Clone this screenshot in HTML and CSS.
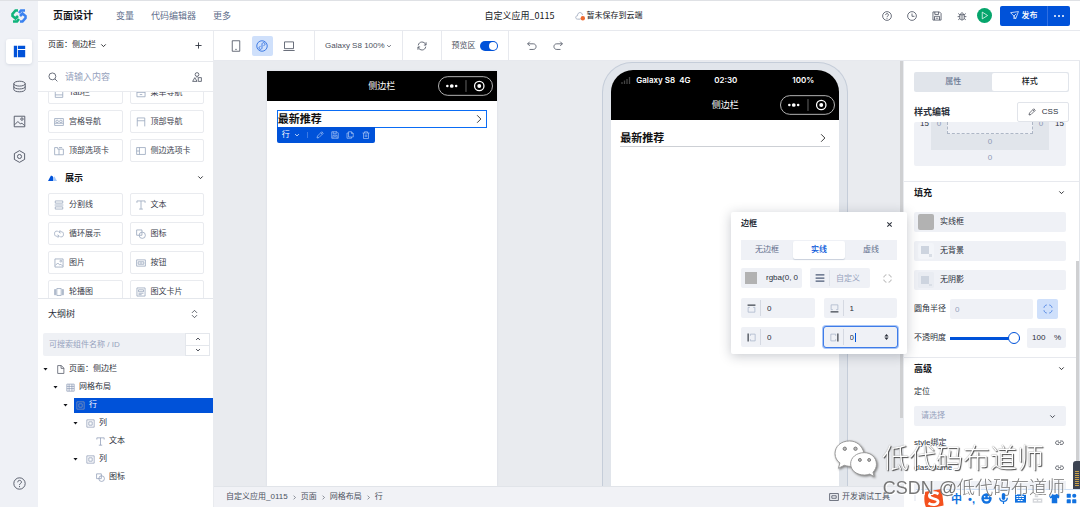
FILE: index.html
```html
<!DOCTYPE html>
<html lang="zh-CN">
<head>
<meta charset="utf-8">
<title>页面设计</title>
<link rel="stylesheet" href="styles.css">
</head>
<body>
<svg class="sprite" aria-hidden="true">
  <symbol id="chev" viewBox="0 0 16 16"><path d="M3 5.5l5 5 5-5"/></symbol>
  <symbol id="chev-r" viewBox="0 0 16 16"><path d="M5 2l6 6-6 6"/></symbol>
  <symbol id="plus" viewBox="0 0 16 16"><path d="M8 1v14M1 8h14"/></symbol>
  <symbol id="close" viewBox="0 0 16 16"><path d="M3 3l10 10M13 3L3 13"/></symbol>
  <symbol id="search" viewBox="0 0 16 16"><circle cx="7" cy="7" r="5.5"/><path d="M11 11l4 4"/></symbol>
  <symbol id="org" viewBox="0 0 16 16"><circle cx="8" cy="4" r="3"/><path d="M8 7v2M1 15l3.500-6L8 15zM10 9h5v6h-5z"/></symbol>
  <symbol id="db" viewBox="0 0 16 16"><ellipse cx="8" cy="4.500" rx="7" ry="3"/><path d="M1 4.500v7c0 4 14 4 14 0v-7M1 8c0 4 14 4 14 0"/></symbol>
  <symbol id="image" viewBox="0 0 16 16"><path d="M1.500 1.500h13v13h-13zM2 12l4-4 3 3 2-1 3 3"/><circle cx="11" cy="5" r="1.500"/></symbol>
  <symbol id="hex" viewBox="0 0 16 16"><path d="M8 .8l6.300 3.600v7.200L8 15.200l-6.300-3.600V4.400z"/><circle cx="8" cy="8" r="2.500"/></symbol>
  <symbol id="help" viewBox="0 0 16 16"><circle cx="8" cy="8" r="7"/><path d="M5.800 6.500c0-3.200 4.600-3 4.600-.2C10.400 8 8 8 8 9.800M8 11v1.500"/></symbol>
  <symbol id="clock" viewBox="0 0 16 16"><circle cx="8" cy="8" r="7"/><path d="M8 4v4.500h4"/></symbol>
  <symbol id="save" viewBox="0 0 16 16"><path d="M1.500 1.500h10.500l2.500 2.500v10.500h-13zM4.500 1.500v4h6v-4M4 14.500V8.500h8v6M6 11.500h4"/></symbol>
  <symbol id="bug" viewBox="0 0 16 16"><path d="M4.500 6h7v5c0 4.500-7 4.500-7 0zM5.500 6c0-4 5-4 5 0M8 6v8M1 9h3.500M11.500 9H15M2 4l2.500 2M14 4l-2.500 2M2 14l2.700-2M14 14l-2.700-2"/></symbol>
  <symbol id="play" viewBox="0 0 16 16"><path d="M4 2l9.500 6L4 14z"/></symbol>
  <symbol id="send" viewBox="0 0 16 16"><path d="M1 3l14-2-5 13-3-5zM7 9l4-4M7 9v5l2-2"/></symbol>
  <symbol id="phone" viewBox="0 0 16 16"><path d="M3 1h10v14H3zM7 12.500h2"/></symbol>
  <symbol id="mini" viewBox="0 0 16 16"><circle cx="8" cy="8" r="7"/><path d="M8 10.300c0 2.900-4 2.900-4 .2C4 9 5.200 8.700 6 8.500M8 10.300V5.700c0-2.900 4-2.900 4-.2 0 1.500-1.200 1.800-2 2"/></symbol>
  <symbol id="laptop" viewBox="0 0 16 16"><path d="M2 2.500h12v9H2zM.5 14h15"/></symbol>
  <symbol id="refresh" viewBox="0 0 16 16"><path d="M2 7c1-7 10-7 12-1M14 9c-1 7-10 7-12 1M14.500 2v4.500H11M1.500 14V9.500H5"/></symbol>
  <symbol id="undo" viewBox="0 0 16 16"><path d="M4.500 1L1 4.500 4.500 8M1 4.500h9c6 0 6 9 0 9H4"/></symbol>
  <symbol id="redo" viewBox="0 0 16 16"><path d="M11.500 1L15 4.500 11.500 8M15 4.500H6c-6 0-6 9 0 9h6"/></symbol>
  <symbol id="pencil" viewBox="0 0 16 16"><path d="M2 14l1-4 8.500-8.500 3 3L6 13zM9.500 3.500l3 3"/></symbol>
  <symbol id="copy" viewBox="0 0 16 16"><path d="M5 1.500h6l3.500 3.500v7H5zM11 1.500V5h3.500M5 4H2v10.500h9V12"/></symbol>
  <symbol id="trash" viewBox="0 0 16 16"><path d="M1 4h14M5 4V1.500h6V4M3 4v11h10V4M6.500 7v5M9.500 7v5"/></symbol>
  <symbol id="tabbar" viewBox="0 0 16 16"><path d="M2 1h12v14H2zM2 11h12"/></symbol>
  <symbol id="menu" viewBox="0 0 16 16"><path d="M1.500 2h13v12h-13zM1.500 7h13M6 10.500h4"/></symbol>
  <symbol id="grid-nav" viewBox="0 0 16 16"><path d="M1 2.500h14v11H1zM1 10h14"/><circle cx="5" cy="7" r="2"/><circle cx="11" cy="7" r="2"/></symbol>
  <symbol id="topnav" viewBox="0 0 16 16"><path d="M2 15V1.500h12V15M2 6h12"/></symbol>
  <symbol id="toptab" viewBox="0 0 16 16"><path d="M1 2.500h5V5h9v9H1zM8 2.500h5M8 5v9"/></symbol>
  <symbol id="sidetab" viewBox="0 0 16 16"><path d="M1 2.500h14v11H1zM5.500 2.500v11M1 8h4.500"/></symbol>
  <symbol id="divider" viewBox="0 0 16 16"><path d="M2 1.500h12v3.500H2zM1 8h14M2 11h12v3.500H2z"/></symbol>
  <symbol id="text" viewBox="0 0 16 16"><path d="M1.500 4.500v-3h13v3M8 1.500v13M5 14.500h6"/></symbol>
  <symbol id="loop" viewBox="0 0 16 16"><path d="M6 3.500H3.500c-3.500 0-3.500 8 0 8H8M10 12.500h2.500c3.500 0 3.500-8 0-8H8M6 9l2.500 2.500L6 14M10 2L7.500 4.500 10 7"/></symbol>
  <symbol id="shapes" viewBox="0 0 16 16"><path d="M1 1.500h8.500V10H1z"/><circle cx="10" cy="10" r="5"/></symbol>
  <symbol id="btn" viewBox="0 0 16 16"><path d="M1 3h14v10H1zM3.500 6h9v4h-9zM6 8h4"/></symbol>
  <symbol id="carousel" viewBox="0 0 16 16"><path d="M4.500 2.500h7v11h-7zM1 4v8.500h1.500V4zM13.500 4v8.500H15V4z"/></symbol>
  <symbol id="card" viewBox="0 0 16 16"><path d="M1.500 1.500h13v13h-13zM4 4.500h8v3H4zM4 10h8M4 12.300h5"/></symbol>
  <symbol id="file" viewBox="0 0 16 16"><path d="M3 1h6.500L14 5.500V15H3zM9 1v5h5"/></symbol>
  <symbol id="grid" viewBox="0 0 16 16"><path d="M1.500 2h13v12.500h-13zM1.500 6h13M1.500 10h13M5.500 2v12.500M10.500 2v12.500"/></symbol>
  <symbol id="box" viewBox="0 0 16 16"><path d="M1.500 1.500h13v13h-13zM5 5h6v6H5z"/></symbol>
  <symbol id="link" viewBox="0 0 16 16"><path d="M7 10.500H4c-4 0-4-6 0-6h3M9 4.500h3c4 0 4 6 0 6H9M5.500 7.500h5"/></symbol>
  <symbol id="corners" viewBox="0 0 16 16"><path d="M1.500 6C2 3.500 3.500 2 6 1.500M10 1.500c2.500.5 4 2 4.500 4.500M14.500 10c-.5 2.500-2 4-4.500 4.500M6 14.500C3.500 14 2 12.500 1.500 10"/></symbol>
  <symbol id="side" viewBox="0 0 16 16"><path class="pale" d="M5 6H2v8.500h12V6h-3"/><path class="edge" d="M1 2h14"/></symbol>
  <symbol id="lines" viewBox="0 0 16 16"><path d="M1 3h14M1 8h14M1 13h14"/></symbol>
  <symbol id="tool" viewBox="0 0 16 16"><path d="M1 2.500h14v11H1zM4.500 6h7v4h-7z"/></symbol>
  <symbol id="updown" viewBox="0 0 16 16"><path d="M3.500 6L8 1.500 12.500 6M3.500 10L8 14.500 12.500 10"/></symbol>
  <symbol id="capsule" viewBox="0 0 56 20"><rect x=".5" y=".5" width="55" height="19" rx="9.500" stroke="#b5b5b5"/><circle class="w" cx="9.500" cy="10" r="1.300"/><circle class="w" cx="14" cy="10" r="1.900"/><circle class="w" cx="18.500" cy="10" r="1.300"/><path d="M28.500 4v12" stroke="#666"/><circle cx="42" cy="10" r="4.800" stroke-width="1.300"/><circle class="w" cx="42" cy="10" r="2"/></symbol>
</svg>

<div class="app">
  <aside class="rail">
    <svg class="logo" viewBox="0 0 16 14"><path d="M7 1.500H4.500L1.500 5v2l3 2.500L7 7M2 12.500h4L8 10" stroke="#10b47c"/><path d="M9 12.500h2.500l3-3.500V7l-3-2.500L9 7M14 1.500h-4L8 4" stroke="#3b82f0"/></svg>
    <button class="rail-btn rail-active" aria-label="页面"><svg viewBox="0 0 16 16"><path fill="#0052d9" stroke="none" d="M1 1h4v14H1zM6 1h9v4H6zM6 6h9v9H6z"/></svg></button>
    <button class="rail-btn" aria-label="数据"><svg><use href="#db"/></svg></button>
    <button class="rail-btn" aria-label="素材"><svg><use href="#image"/></svg></button>
    <button class="rail-btn" aria-label="设置"><svg><use href="#hex"/></svg></button>
    <button class="rail-btn rail-help" aria-label="帮助"><svg><use href="#help"/></svg></button>
  </aside>

  <header class="header">
    <h1 class="title">页面设计</h1>
    <nav class="nav"><a href="#">变量</a><a href="#">代码编辑器</a><a href="#">更多</a></nav>
    <div class="doc"><span class="doc-name">自定义应用_0115</span>
      <span class="doc-state"><svg viewBox="0 0 16 16"><path d="M9 13H4c-4 0-3.500-5.500 0-5.500C4 1 11.500 1 12 6.500" stroke="#9aa5ba"/><circle cx="12.500" cy="11.500" r="3.500" fill="#ed6a30" stroke="none"/></svg>暂未保存到云端</span></div>
    <div class="actions">
      <button aria-label="帮助"><svg><use href="#help"/></svg></button>
      <button aria-label="历史"><svg><use href="#clock"/></svg></button>
      <button aria-label="保存"><svg><use href="#save"/></svg></button>
      <button aria-label="调试"><svg><use href="#bug"/></svg></button>
    </div>
    <button class="run" aria-label="预览"><svg><use href="#play"/></svg></button>
    <div class="publish"><button class="pub-main"><svg><use href="#send"/></svg>发布</button><button class="pub-more" aria-label="更多操作"><i></i><i></i><i></i></button></div>
  </header>

  <section class="left">
    <div class="page-pick"><button class="pick">页面：侧边栏<svg><use href="#chev"/></svg></button><button aria-label="新建页面"><svg><use href="#plus"/></svg></button></div>
    <div class="find"><svg><use href="#search"/></svg><input type="text" placeholder="请输入内容" aria-label="搜索组件"><svg class="org"><use href="#org"/></svg></div>
    <div class="library">
      <div class="library-scroll">
        <div class="cards">
          <button class="card"><svg><use href="#tabbar"/></svg>Tab栏</button>
          <button class="card"><svg><use href="#menu"/></svg>菜单导航</button>
          <button class="card"><svg><use href="#grid-nav"/></svg>宫格导航</button>
          <button class="card"><svg><use href="#topnav"/></svg>顶部导航</button>
          <button class="card"><svg><use href="#toptab"/></svg>顶部选项卡</button>
          <button class="card"><svg><use href="#sidetab"/></svg>侧边选项卡</button>
        </div>
        <h2 class="group"><svg class="group-icon" viewBox="0 0 18 12"><path fill="#0052d9" d="M0 12L6 1l4 2v9z"/><path fill="#a9cbfa" d="M10 12V5l3-2 5 9z"/></svg>展示<svg class="chev"><use href="#chev"/></svg></h2>
        <div class="cards">
          <button class="card"><svg><use href="#divider"/></svg>分割线</button>
          <button class="card"><svg><use href="#text"/></svg>文本</button>
          <button class="card"><svg><use href="#loop"/></svg>循环展示</button>
          <button class="card"><svg><use href="#shapes"/></svg>图标</button>
          <button class="card"><svg><use href="#image"/></svg>图片</button>
          <button class="card"><svg><use href="#btn"/></svg>按钮</button>
          <button class="card"><svg><use href="#carousel"/></svg>轮播图</button>
          <button class="card"><svg><use href="#card"/></svg>图文卡片</button>
        </div>
      </div>
    </div>
    <div class="outline">
      <h2 class="outline-head">大纲树<svg><use href="#updown"/></svg></h2>
      <div class="outline-find"><input type="text" placeholder="可搜索组件名称 / ID" aria-label="搜索大纲"><div class="steps"><button aria-label="上一个"><svg class="flip"><use href="#chev"/></svg></button><button aria-label="下一个"><svg><use href="#chev"/></svg></button></div></div>
      <ul class="tree">
        <li><i class="caret"></i><span class="node dark"><svg><use href="#file"/></svg>页面：侧边栏</span></li>
        <li class="d1"><i class="caret"></i><span class="node"><svg><use href="#grid"/></svg>网格布局</span></li>
        <li class="d2"><i class="caret"></i><span class="node selected"><svg><use href="#box"/></svg>行</span></li>
        <li class="d3"><i class="caret"></i><span class="node"><svg><use href="#box"/></svg>列</span></li>
        <li class="d4"><span class="node"><svg><use href="#text"/></svg>文本</span></li>
        <li class="d3"><i class="caret"></i><span class="node"><svg><use href="#box"/></svg>列</span></li>
        <li class="d4"><span class="node"><svg><use href="#shapes"/></svg>图标</span></li>
      </ul>
    </div>
  </section>

  <div class="toolbar">
    <div class="cell devices"><button aria-label="手机"><svg><use href="#phone"/></svg></button><button class="on" aria-label="小程序"><svg><use href="#mini"/></svg></button><button aria-label="电脑"><svg><use href="#laptop"/></svg></button></div>
    <div class="cell"><button class="zoom">Galaxy S8 100%<svg><use href="#chev"/></svg></button></div>
    <div class="cell reload"><button aria-label="刷新"><svg><use href="#refresh"/></svg></button></div>
    <div class="cell"><label class="switch">预览区<input type="checkbox" checked></label></div>
    <div class="cell history"><button aria-label="撤销"><svg><use href="#undo"/></svg></button><button aria-label="重做"><svg><use href="#redo"/></svg></button></div>
  </div>

  <main class="canvas">
    <section class="editor">
      <div class="navbar">侧边栏<span class="capsule"><svg><use href="#capsule"/></svg></span></div>
      <div class="editor-body">
        <div class="pick-row"><b>最新推荐</b><svg><use href="#chev-r"/></svg>
          <div class="quick"><button class="quick-name">行<svg><use href="#chev"/></svg></button><i></i><button aria-label="编辑"><svg><use href="#pencil"/></svg></button><button aria-label="保存"><svg><use href="#save"/></svg></button><button aria-label="复制"><svg><use href="#copy"/></svg></button><button aria-label="删除"><svg><use href="#trash"/></svg></button></div>
        </div>
      </div>
    </section>
    <section class="device">
      <div class="screen">
        <div class="status"><span class="carrier"><svg viewBox="0 0 10 8"><path d="M1 6v2M3.500 4.500V8M6 3v5M8.500 1v7" stroke="#444"/></svg>Galaxy S8&nbsp; 4G</span><span>02:30</span><span class="battery">100%</span></div>
        <div class="navbar">侧边栏<span class="capsule"><svg><use href="#capsule"/></svg></span></div>
        <div class="preview-row"><b>最新推荐</b><svg><use href="#chev-r"/></svg></div>
      </div>
    </section>
    <i class="canvas-scroll"></i>
  </main>

  <footer class="footer">
    <nav class="crumbs"><a href="#">自定义应用_0115</a><svg><use href="#chev-r"/></svg><a href="#">页面</a><svg><use href="#chev-r"/></svg><a href="#">网格布局</a><svg><use href="#chev-r"/></svg><a href="#">行</a></nav>
    <button class="devtool"><svg><use href="#tool"/></svg>开发调试工具</button>
  </footer>

  <aside class="props">
    <div class="seg"><button>属性</button><button class="seg-on">样式</button></div>
    <div class="style-head"><h2>样式编辑</h2><button class="css-btn"><svg><use href="#pencil"/></svg>CSS</button></div>
    <div class="boxmodel"><div class="margin-row"><span class="num">15</span><div class="padding-box"><div class="padding-row"><span>0</span><div class="content-box"></div><span>0</span></div><span class="below">0</span></div><span class="num">15</span></div><span class="below">0</span></div>
    <section class="sec">
      <h2 class="sec-head">填充<svg><use href="#chev"/></svg></h2>
      <div class="sec-body">
        <button class="fill"><i class="swatch"></i>实线框</button>
        <button class="fill"><i class="swatch none"></i>无背景</button>
        <button class="fill"><i class="swatch shade"></i>无阴影</button>
        <div class="field"><label for="radius">圆角半径</label><input id="radius" type="text" placeholder="0"><button class="corner" aria-label="分别设置"><svg><use href="#corners"/></svg></button></div>
        <div class="field"><label for="opacity">不透明度</label><input id="opacity" type="range" value="100"><span class="percent"><input type="text" value="100" aria-label="不透明度数值">%</span></div>
      </div>
    </section>
    <section class="sec sec-adv">
      <h2 class="sec-head">高级<svg><use href="#chev"/></svg></h2>
      <div class="adv">
        <label for="pos">定位</label>
        <div class="select"><select id="pos"><option>请选择</option></select><svg><use href="#chev"/></svg></div>
        <div class="bind"><span>style绑定</span><svg><use href="#link"/></svg></div>
        <div class="bind bind-class"><span>classname</span><svg><use href="#link"/></svg></div>
        <input class="class-input" type="text" aria-label="classname">
      </div>
    </section>
    <i class="props-scroll"></i>
  </aside>

  <div class="popover" role="dialog" aria-label="边框">
    <div class="pop-head"><h2>边框</h2><button aria-label="关闭"><svg><use href="#close"/></svg></button></div>
    <div class="pop-tabs"><button>无边框</button><button class="pop-on">实线</button><button>虚线</button></div>
    <div class="pop-color"><label class="color"><i></i><input type="text" value="rgba(0, 0" aria-label="颜色"></label><label class="custom"><svg><use href="#lines"/></svg><input type="text" placeholder="自定义" aria-label="线宽"></label><button aria-label="四边"><svg><use href="#corners"/></svg></button></div>
    <div class="sides">
      <label class="side"><svg><use href="#side"/></svg><input type="text" value="0" aria-label="上边框"></label>
      <label class="side"><svg class="r180"><use href="#side"/></svg><input type="text" value="1" aria-label="下边框"></label>
      <label class="side"><svg class="r270"><use href="#side"/></svg><input type="text" value="0" aria-label="左边框"></label>
      <label class="side focus"><svg class="r90"><use href="#side"/></svg><input type="text" value="0" aria-label="右边框"><i class="text-caret"></i><svg class="spin" viewBox="0 0 8 10"><path d="M4 0l3.500 4h-7zM4 10L.5 6h7z"/></svg></label>
    </div>
  </div>
</div>

<div class="ime">
  <svg class="sogou" viewBox="0 0 24 24"><path d="M3 4l18-3 2 18-18 4c-3-4-4-12-2-19z" fill="#f4511e"/><path d="M17.500 6.500C13 4 7.500 5 7.500 8.500c0 4.500 10 2 9.500 6.500-.4 3.500-6.500 4.200-10.500 1.500" stroke="#fff" stroke-width="3" fill="none"/></svg>
  <span>中</span><span>•,</span>
  <svg viewBox="0 0 16 16"><circle cx="8" cy="8" r="7.500"/><path d="M4 9c1 4 7 4 8 0z" fill="#fff"/><circle cx="5.300" cy="5.500" r="1.200" fill="#fff"/><circle cx="10.700" cy="5.500" r="1.200" fill="#fff"/></svg>
  <svg viewBox="0 0 16 16"><rect x="5.500" y="0" width="5" height="10" rx="2.500"/><path d="M2.500 7c0 7 11 7 11 0M8 12v4" fill="none" stroke="#1272e0" stroke-width="1.800"/></svg>
  <svg viewBox="0 0 16 16"><path d="M0 2h16v12H0z"/><path d="M2 5h12M2 8h12M4 11h8" stroke="#fff" stroke-width="1.500" stroke-dasharray="3 1"/></svg>
  <svg viewBox="0 0 16 16"><path d="M1 8h14v6H1zM4 3h5v3H4z" fill="#d5d7db"/><path d="M3 11h4M9 11h4" stroke="#fff" stroke-width="2"/></svg>
  <svg viewBox="0 0 16 16"><path d="M5 1c1 2 5 2 6 0l5 3-2 4-2-1v8H4V7L2 8 0 4z"/></svg>
  <svg viewBox="0 0 16 16"><rect x="1" y="1" width="6" height="6" rx="1"/><rect x="9" y="1" width="6" height="6" rx="3"/><rect x="1" y="9" width="6" height="6" rx="1"/><rect x="9" y="9" width="6" height="6" rx="1"/></svg>
</div>
<i class="meter"></i>
<div class="mark mark-big"><svg viewBox="0 0 44 40"><path d="M16 2C7 2 1 7.500 1 15c0 4 2 7.500 5 9.500L4.500 30l6-3c3 1 6 1.200 8 1 12-1 13-9 12-14C29 7 23 2 16 2z"/><path d="M31 14c-8 0-14 5-14 11.500S23 37 31 37c2 0 4-.4 5.500-1l4.500 2.500-1-4.500c2-2 3.500-5 3.500-8C43.500 19 38 14 31 14z"/><g class="eyes"><circle cx="11" cy="10" r="1.700"/><circle cx="22" cy="10" r="1.700"/><circle cx="26.500" cy="21.500" r="1.500"/><circle cx="36" cy="21.500" r="1.500"/></g></svg>低代码布道师</div>
<div class="mark mark-small">CSDN @低代码布道师</div>
</body>
</html>
```

FILE: styles.css
```css
* { box-sizing: border-box; }
body {
  margin: 0;
  font: 8px/12px "Liberation Sans", "Noto Sans CJK SC", sans-serif;
  color: #2b303b;
  background: #fff;
  overflow: hidden;
}
h1, h2, ul { margin: 0; padding: 0; list-style: none; }
h2 { font-size: 9px; line-height: 12px; font-weight: 700; }
button, input, select { font: inherit; color: inherit; border: 0; padding: 0; margin: 0; background: none; min-width: 0; outline: 0; }
button { display: inline-flex; align-items: center; justify-content: center; white-space: nowrap; }
input::placeholder { color: #96a2bd; opacity: 1; }
a { color: inherit; text-decoration: none; }
svg { width: 10px; height: 10px; flex: none; fill: none; stroke: currentColor; stroke-width: 1.3; }
.sprite { position: absolute; width: 0; height: 0; }

.app {
  position: relative;
  display: grid;
  grid-template: 30px 30px 1fr 21px / 38px 176px 1fr 176px;
  height: 100vh;
  border-top: 1px solid #dfe1e5;
}

/* icon rail */
.rail { grid-row: 1 / -1; grid-column: 1; background: #eff1f6; display: flex; flex-direction: column; align-items: center; gap: 10px; padding: 7px 0 11px; color: #4b5160; }
.logo { width: 16px; height: 16px; stroke-width: 2.6; margin-bottom: 5px; }
.rail-btn { width: 26px; height: 25px; border-radius: 3px; }
.rail-btn svg { width: 13px; height: 13px; stroke-width: 1.1; }
.rail-active { background: #fff; box-shadow: 0 1px 3px #d5d9e2; }
.rail-help { margin-top: auto; }

/* header */
.header { grid-row: 1; grid-column: 2 / -1; display: flex; align-items: center; padding: 0 10px 0 15px; border-bottom: 1px solid #e7e9ee; }
.title { font-size: 10px; line-height: 14px; color: #16181d; }
.nav { display: flex; gap: 17px; margin-left: 23px; font-size: 9px; color: #5f6f8c; }
.doc { flex: 1; display: flex; align-items: center; justify-content: center; gap: 20px; padding-left: 14px; }
.doc-name { font-size: 9px; color: #16181d; font-family: "Noto Sans CJK SC", sans-serif; }
.doc-state { display: flex; align-items: center; gap: 2px; color: #16181d; }
.actions { display: flex; gap: 15px; color: #4b5160; }
.run { width: 15px; height: 15px; border-radius: 50%; background: #06a56c; color: #fff; margin: 0 8px 0 10px; }
.run svg { width: 9px; height: 9px; }
.publish { display: flex; height: 20px; background: #0052d9; color: #fff; border-radius: 2px; font-weight: 500; }
.pub-main { width: 48px; gap: 3px; border-right: 1px solid #2f6fe2; }
.pub-main svg { width: 9px; height: 9px; }
.pub-more { width: 22px; gap: 2px; }
.pub-more i { width: 2px; height: 2px; border-radius: 50%; background: #fff; }

/* left column */
.left { grid-row: 2 / -1; grid-column: 2; display: flex; flex-direction: column; border-right: 1px solid #e9ebef; min-height: 0; }
.page-pick, .find { display: flex; align-items: center; justify-content: space-between; height: 31px; flex: none; padding: 0 11px 2px 10px; border-bottom: 1px solid #e9ebef; }
.pick { gap: 4px; color: #16181d; }
.page-pick svg, .chev { width: 7px; height: 7px; stroke-width: 2; }
.find { height: 30px; padding-bottom: 0; font-size: 9px; gap: 7px; color: #4b5160; }
.find input { flex: 1; }
.library { flex: 1; overflow: hidden; min-height: 0; }
.library-scroll { margin-top: -11px; padding: 0 9px 0 10px; }
.cards { display: grid; grid-template-columns: 1fr 1fr; gap: 6px 7px; }
.card { height: 23px; border: 1px solid #e9ebef; border-radius: 2px; justify-content: flex-start; gap: 5px; padding-left: 5px; color: #3b404c; }
.card svg { color: #9aa7be; }
.group { display: flex; align-items: center; height: 31px; gap: 8px; color: #16181d; }
.group-icon { width: 9px; height: 6px; stroke: none; }
.chev { margin-left: auto; }
.outline { height: 209px; flex: none; border-top: 1px solid #e4e7ec; }
.outline-head { display: flex; align-items: center; justify-content: space-between; height: 30px; padding: 0 14px 0 10px; font-weight: 400; }
.outline-head svg { width: 9px; }
.outline-find { display: flex; height: 23px; margin: 4px 3px 4px 5px; background: #eff1f5; border-radius: 2px; }
.outline-find input { flex: 1; padding-left: 6px; }
.steps { width: 25px; display: grid; grid-template-rows: 1fr 1fr; background: #fff; border: 1px solid #e4e7ec; }
.steps button + button { border-top: 1px solid #e4e7ec; }
.steps svg { width: 6px; height: 6px; stroke-width: 2.4; }
.flip { transform: rotate(180deg); }
.tree li { display: flex; align-items: center; height: 18px; padding-left: 5px; }
.caret { width: 5px; height: 3px; background: #16181d; clip-path: polygon(0 0, 100% 0, 50% 100%); margin-right: 6px; flex: none; }
.node { flex: 1; display: flex; align-items: center; height: 15px; gap: 4px; padding-left: 2px; }
.node svg { width: 9px; height: 9px; color: #8c9ab5; }
.node.dark svg { color: #4b5160; }
.tree .d1 { padding-left: 15px; }
.tree .d2 { padding-left: 25px; }
.tree .d3 { padding-left: 35px; }
.tree .d4 { padding-left: 56px; }
.selected { background: #0052d9; color: #fff; }

/* toolbar */
.toolbar { grid-row: 2; grid-column: 3 / -1; display: flex; border-bottom: 1px solid #e7e9ee; color: #4b5160; }
.cell { display: flex; align-items: center; padding: 0 10px; border-right: 1px solid #e7e9ee; }
.devices { padding: 0 15px 0 12px; gap: 6px; width: 101px; }
.devices button { width: 22px; height: 20px; border-radius: 2px; }
.devices svg { width: 12px; height: 12px; stroke-width: 1.1; }
.devices .on { background: #cfe0fb; color: #2468e0; }
.zoom { gap: 1px; }
.zoom svg { width: 6px; height: 6px; stroke-width: 2; }
.reload { padding: 0 14px; }
.switch { display: flex; align-items: center; gap: 4px; }
.switch input { appearance: none; display: flex; justify-content: flex-end; width: 18px; height: 10px; padding: 1px; border-radius: 5px; background: #0052d9; }
.switch input::before { content: ""; width: 8px; height: 8px; border-radius: 50%; background: #fff; }
.history { border: 0; gap: 16px; padding-left: 18px; }

/* canvas */
.canvas { position: relative; grid-row: 3; grid-column: 3; display: flex; justify-content: space-around; background: #e9ebef; padding-right: 3px; min-height: 0; overflow: hidden; }
.canvas-scroll { position: absolute; right: 1px; top: 0; width: 3px; height: 84%; background: #cfd0d2; }
.editor { width: 34%; max-width: 230px; margin-top: 10px; background: #fff; box-shadow: 0 0 2px #d5d9e2; }
.navbar { position: relative; height: 30px; display: flex; align-items: center; justify-content: center; background: #000; color: #fff; font-size: 9px; }
.capsule { position: absolute; right: 4px; top: 5px; display: flex; }
.capsule svg { width: 55px; height: 20px; stroke-width: 1; }
.w { fill: #fff; stroke: none; }
.editor-body { padding: 9px 10px; }
.pick-row, .preview-row { position: relative; display: flex; align-items: center; justify-content: space-between; height: 18px; font-size: 11px; color: #111; }
.pick-row { border: 1px solid #0a6cf5; padding-right: 2px; }
.quick { position: absolute; top: 16px; left: -1px; display: flex; align-items: center; justify-content: space-between; width: 98px; height: 16px; padding: 0 5px; background: #0052d9; color: #b5cef8; border-radius: 0 0 2px 2px; font-size: 8px; }
.quick svg { width: 8px; height: 8px; }
.quick-name { gap: 4px; color: #fff; }
.quick-name svg { width: 6px; height: 6px; stroke-width: 2; }
.quick > i { width: 1px; height: 6px; background: #3d7be5; }
.device { width: 36%; max-width: 246px; margin-top: 1px; padding: 7px 8px 0; background: #e1e5eb; border: 1px solid #c5cdd9; border-bottom: 0; border-radius: 30px 30px 0 0; }
.screen { height: 100%; background: #fff; border-radius: 22px 22px 0 0; overflow: hidden; }
.status { display: grid; grid-template-columns: 1fr auto 1fr; align-items: center; height: 20px; padding: 0 25px 0 10px; background: #000; color: #fff; font-family: Inter, sans-serif; font-weight: 600; }
.status > :nth-child(2) { padding-left: 16px; }
.carrier { display: flex; align-items: center; gap: 5px; }
.carrier svg { height: 8px; }
.battery { text-align: right; }
.preview-row { margin: 9px 9px 0; border-bottom: 1px solid #cdd0d5; padding-right: 2px; }

/* footer */
.footer { grid-row: 4; grid-column: 3; display: flex; align-items: center; justify-content: space-between; padding: 0 14px 0 12px; background: #f1f2f6; border-top: 1px solid #e1e4e9; color: #4b5160; }
.crumbs { display: flex; align-items: center; gap: 4px; }
.crumbs svg { width: 5px; height: 5px; stroke-width: 2; }
.devtool { gap: 3px; }

/* properties */
.props { position: relative; grid-row: 3 / -1; grid-column: 4; background: #fff; border-right: 1px solid #e4e7ec; overflow: hidden; }
.seg { display: flex; height: 20px; margin: 11px 10px 0; background: #e1e5eb; border-radius: 2px; padding: 1px; font-weight: 500; color: #6a7893; }
.seg button { flex: 1; }
.seg .seg-on { background: #fff; color: #16181d; border-radius: 2px; }
.style-head { display: flex; align-items: center; justify-content: space-between; margin: 10px 10px 0; }
.css-btn { position: relative; width: 52px; height: 20px; gap: 6px; border: 1px solid #e1e4ea; border-radius: 2px; background: #fff; }
.css-btn svg { width: 8px; height: 8px; }
.boxmodel { height: 44px; margin: 0 13px 0 10px; background: #eff1f6; border-radius: 2px; display: flex; flex-direction: column; color: #8c9ab5; overflow: hidden; }
.margin-row { display: flex; height: 28px; flex: none; }
.num { width: 17px; padding-left: 6px; line-height: 3px; color: #2b303b; }
.padding-box { flex: 1; background: #e1e5eb; display: flex; flex-direction: column; }
.padding-row { display: flex; justify-content: space-between; line-height: 3px; height: 12px; padding: 0; text-align: center; }
.padding-row span { width: 16px; }
.content-box { flex: 1; background: #eff1f6; border: 1px dashed #aeb7c6; border-top: 0; }
.below { text-align: center; line-height: 16px; }
.sec { margin-top: 15px; border-top: 1px solid #e7e9ee; }
.sec-head { display: flex; align-items: center; justify-content: space-between; height: 21px; padding: 0 14px 0 10px; color: #16181d; }
.sec-head svg, .select svg { width: 7px; height: 7px; stroke-width: 2; }
.sec-body { display: grid; grid-template-columns: minmax(0, 1fr); gap: 9px; padding: 9px 13px 0 10px; }
.fill { height: 20px; background: #eff1f6; border-radius: 2px; justify-content: flex-start; gap: 6px; padding-left: 4px; }
.swatch { width: 16px; height: 16px; border-radius: 2px; background: #b2b2b2; flex: none; }
.none { background: linear-gradient(#cdd4df, #cdd4df) 3px 3px / 8px 8px no-repeat, linear-gradient(#d9dee6, #d9dee6) 11px 11px / 3px 3px no-repeat, #f3f5f9; }
.shade { background: linear-gradient(#cdd4df, #cdd4df) 3px 4px / 8px 8px no-repeat, linear-gradient(#d9dee6, #d9dee6) 11px 12px / 3px 2px no-repeat, #e9ecf2; }
.field { display: flex; align-items: center; gap: 4px; height: 20px; }
.field label { width: 32px; white-space: nowrap; flex: none; }
.field > input[type="text"] { width: 83px; height: 20px; background: #eff1f6; padding-left: 5px; border-radius: 2px; }
.corner { width: 21px; height: 20px; background: #cfe0fb; color: #3b76df; border-radius: 2px; }
.field input[type="range"] { appearance: none; flex: 1; width: 0; height: 12px; background: linear-gradient(#0052d9, #0052d9) center / 100% 3px no-repeat; }
.field input[type="range"]::-webkit-slider-thumb { appearance: none; width: 12px; height: 12px; border-radius: 50%; background: #fff; border: 1px solid #0052d9; }
.percent { display: flex; align-items: center; width: 39px; height: 20px; margin-left: 3px; padding: 0 5px; background: #eff1f6; border-radius: 2px; }
.percent input { width: 0; flex: 1; }
.sec-adv { margin-top: 9px; }
.adv { display: flex; flex-direction: column; padding: 7px 13px 0 10px; }
.select { position: relative; display: flex; height: 20px; margin: 8px 0 10px; }
.select select { appearance: none; flex: 1; background: #eff1f6; padding-left: 7px; color: #96a2bd; border-radius: 2px; }
.select svg { position: absolute; right: 10px; top: 7px; }
.bind { display: flex; align-items: center; justify-content: space-between; height: 13px; padding-right: 2px; }
.bind svg { width: 9px; }
.bind-class { margin: 12px 0 7px; }
.class-input { height: 20px; background: #eff1f6; }
.props-scroll { position: absolute; right: 0; top: 200px; width: 3px; height: 200px; background: #cfd0d2; }

/* border popover, floating over the canvas and panel */
.popover { position: absolute; right: 173px; top: 211px; width: 176px; padding: 6px 10px 7px; background: #fff; border-radius: 2px; box-shadow: 0 2px 12px rgba(30, 40, 60, 0.25); }
.pop-head { display: flex; align-items: center; justify-content: space-between; padding-right: 4px; }
.pop-head h2 { font-size: 8px; }
.pop-head svg { width: 7px; height: 7px; stroke-width: 2.4; }
.pop-tabs { display: grid; grid-template-columns: 1fr 1fr 1fr; height: 20px; margin: 10px 0 8px; background: #eff1f6; color: #5f6f8c; }
.pop-tabs .pop-on { background: #fff; color: #0052d9; box-shadow: 0 1px 1px #c9d0dc; margin: 1px 0; border-radius: 2px; font-weight: 500; }
.pop-color { display: flex; align-items: center; gap: 8px; height: 20px; }
.color, .custom, .side { display: flex; align-items: center; height: 20px; background: #eff1f6; border-radius: 2px; }
.color { width: 61px; padding-left: 4px; gap: 9px; }
.color i { width: 12px; height: 12px; background: #b2b2b2; flex: none; }
.color input { width: 32px; }
.custom { width: 60px; padding-left: 5px; gap: 4px; color: #4c5b77; }
.custom svg { stroke-width: 2; }
.custom input { flex: 1; width: 0; height: 16px; padding-left: 6px; border-left: 1px solid #dfe3ea; }
.pop-color button { flex: 1; color: #8a8a8a; }
.pop-color button svg { width: 9px; height: 9px; }
.sides { display: grid; grid-template-columns: 1fr 1fr; gap: 9px; margin-top: 10px; }
.side { padding-left: 6px; gap: 4px; }
.side > svg { width: 9px; height: 9px; }
.side input { width: 12px; height: 16px; padding-left: 6px; border-left: 1px solid #d5d9e2; }
.pale { stroke: #a6b2c8; }
.edge { stroke: #2b303b; stroke-width: 2; }
.r90 { transform: rotate(90deg); }
.r180 { transform: rotate(180deg); }
.r270 { transform: rotate(270deg); }
.focus { outline: 1px solid #3f7ce8; box-shadow: 0 0 0 2px #a9c6f7; }
.text-caret { width: 1px; height: 9px; margin-left: -4px; background: #0052d9; }
.side > .spin { width: 5px; height: 6px; margin: 0 8px 0 auto; fill: #2b303b; stroke: none; }

/* input-method bar and watermark overlays */
.ime { position: fixed; right: 0; bottom: 0; display: flex; align-items: center; gap: 6px; height: 18px; padding: 0 3px 0 6px; background: #fff; border-top: 1px solid #cfe0f5; color: #1272e0; font-size: 11px; font-weight: 700; }
.ime svg { width: 11px; height: 11px; fill: #1272e0; stroke: none; }
.ime .sogou { width: 23px; height: 22px; }
.meter { position: fixed; right: 0; bottom: 18px; width: 7px; height: 28px; border: 2px solid #3d4452; border-right-width: 1px; border-top-width: 10px; border-radius: 3px 0 0 0; background: repeating-linear-gradient(#c9a24a 0 1px, #3d4452 1px 2px); }
.mark { position: fixed; color: #fff; white-space: nowrap; font-weight: 300; pointer-events: none; }
.mark-big { right: 36px; bottom: 29px; display: flex; align-items: center; gap: 5px; font-size: 27px; line-height: 38px; text-shadow: 1px 1px 1px #444, 0 0 1px #777; }
.mark-big svg { width: 43px; height: 39px; fill: #fff; stroke: #999; stroke-width: 1; filter: drop-shadow(1px 1px 1px #777); }
.mark-big .eyes { fill: #bbb; stroke: #777; }
.mark-small { right: 15px; bottom: 7px; font-size: 18px; line-height: 24px; color: #777; text-shadow: 1px 1px 0 #fff; }
```
